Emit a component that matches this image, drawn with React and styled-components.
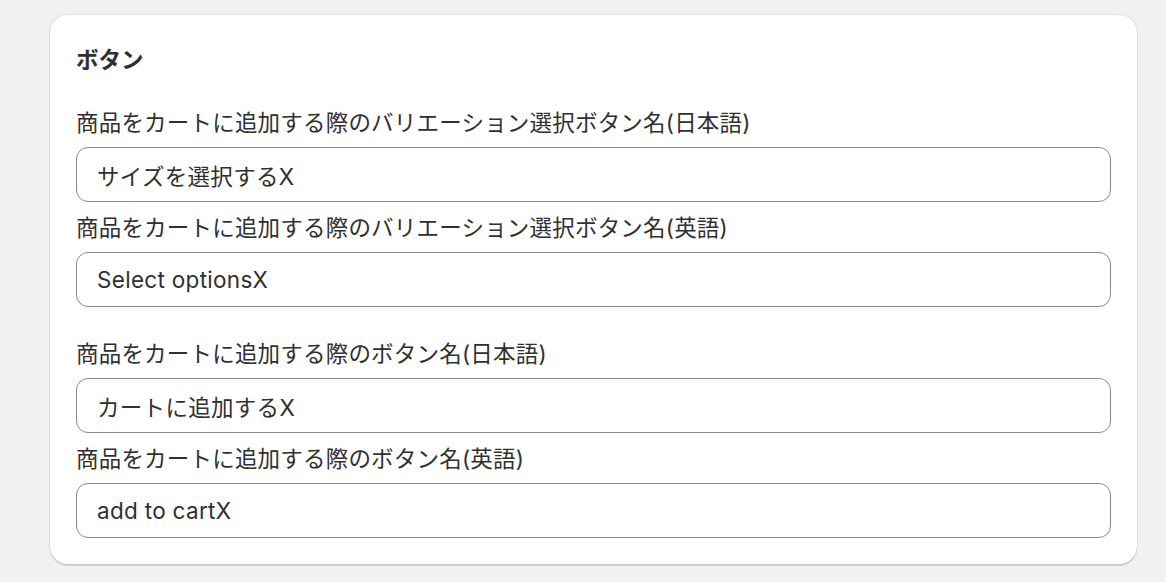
import React from "react";
import styled, { createGlobalStyle } from "styled-components";

const Global = createGlobalStyle`
  html, body { margin: 0; padding: 0; background: #f1f1f1; }
  body {
    font-family: "Inter", "Noto Sans CJK JP", sans-serif;
    color: #303030;
    -webkit-font-smoothing: antialiased;
  }
`;

const Page = styled.div`
  padding: 15px 29px 16px 50px;
`;

const Card = styled.section`
  width: 1087px;
  box-sizing: border-box;
  background: #ffffff;
  border-radius: 18px;
  padding: 28px 26px 26px 26px;
  box-shadow: 0 0 0 1px rgba(0, 0, 0, 0.07), 0 2px 1px rgba(0, 0, 0, 0.12);
  display: flex;
  flex-direction: column;
  gap: 30px;
`;

const Heading = styled.h2`
  margin: 0;
  font-size: 22.5px;
  line-height: 33px;
  font-weight: 700;
  color: #303030;
`;

const Group = styled.div`
  display: flex;
  flex-direction: column;
  gap: 9px;
`;

const Field = styled.label`
  display: flex;
  flex-direction: column;
  gap: 8px;
`;

const LabelText = styled.span`
  font-size: 22.5px;
  line-height: 33px;
  letter-spacing: 0.2px;
  color: #303030;
`;

const Input = styled.input`
  box-sizing: border-box;
  width: 100%;
  height: 55px;
  border: 1px solid #8a8a8a;
  border-radius: 12px;
  padding: 0 20px;
  font-family: inherit;
  font-size: 22.5px;
  letter-spacing: 0.3px;
  color: #303030;
  background: #ffffff;
  outline: none;
`;

const groups = [
  [
    { label: "商品をカートに追加する際のバリエーション選択ボタン名(日本語)", value: "サイズを選択するX" },
    { label: "商品をカートに追加する際のバリエーション選択ボタン名(英語)", value: "Select optionsX" },
  ],
  [
    { label: "商品をカートに追加する際のボタン名(日本語)", value: "カートに追加するX" },
    { label: "商品をカートに追加する際のボタン名(英語)", value: "add to cartX" },
  ],
];

export default function App() {
  return (
    <>
      <Global />
      <Page>
        <Card>
          <Heading>ボタン</Heading>
          {groups.map((g, i) => (
            <Group key={i}>
              {g.map((f) => (
                <Field key={f.label}>
                  <LabelText>{f.label}</LabelText>
                  <Input type="text" defaultValue={f.value} />
                </Field>
              ))}
            </Group>
          ))}
        </Card>
      </Page>
    </>
  );
}
